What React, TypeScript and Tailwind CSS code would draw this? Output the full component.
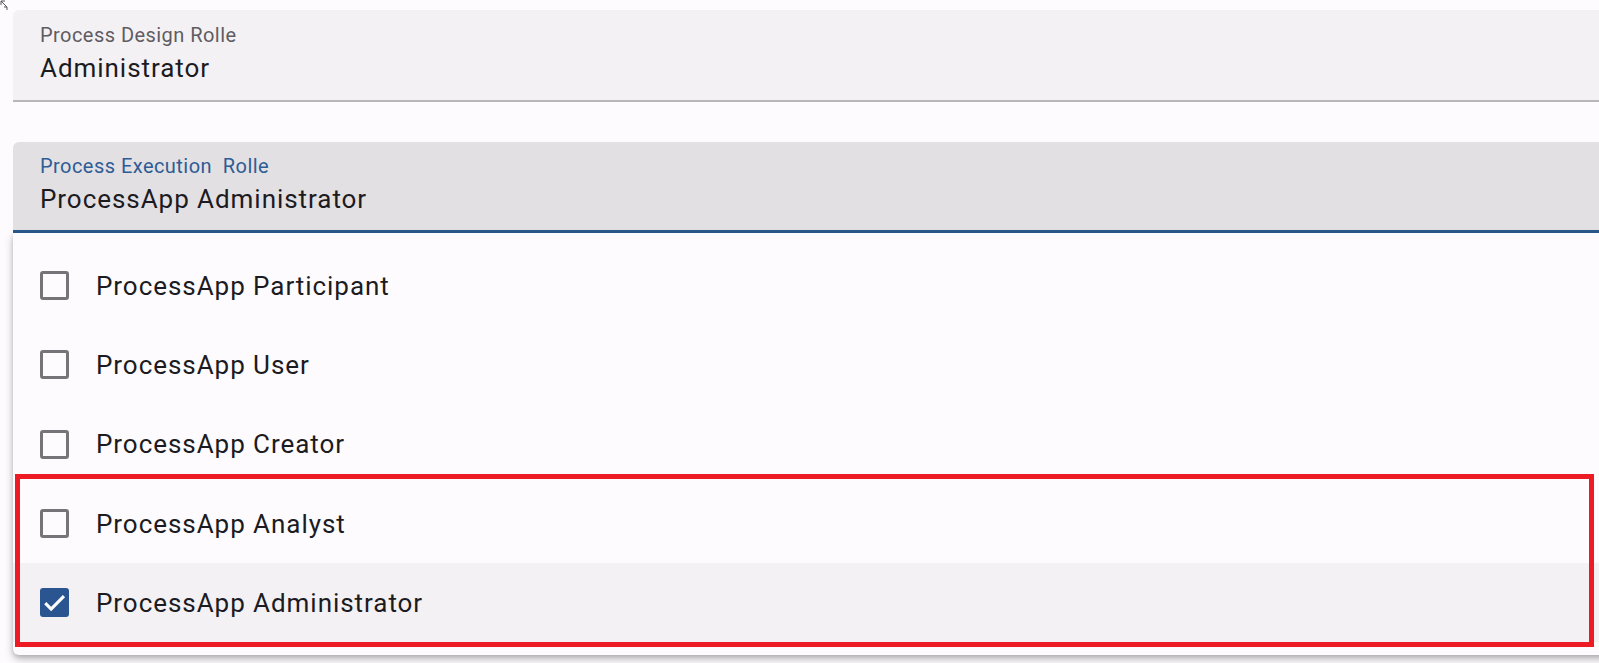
import React from "react";

const roles = [
  { name: "ProcessApp Participant", checked: false },
  { name: "ProcessApp User", checked: false },
  { name: "ProcessApp Creator", checked: false },
  { name: "ProcessApp Analyst", checked: false },
  { name: "ProcessApp Administrator", checked: true },
];

function Checkbox({ checked }: { checked: boolean }) {
  if (checked) {
    return (
      <span className="flex h-[29px] w-[29px] shrink-0 items-center justify-center rounded-[3px] bg-[#2b5590]">
        <svg viewBox="0 0 24 24" className="h-[27px] w-[27px]" fill="none">
          <path d="M3.8 12.6l5.2 5.2L20.4 6.4" stroke="#fff" strokeWidth="2.8" />
        </svg>
      </span>
    );
  }
  return <span className="h-[29px] w-[29px] shrink-0 rounded-[3px] border-[3px] border-[#767478]" />;
}

export default function App() {
  return (
    <div className="relative h-[663px] w-[1599px] overflow-hidden bg-[#fefbff] font-['Roboto',sans-serif] text-[#1c1b1f]">
      {/* resize cursor left over in the capture */}
      <svg className="absolute left-0 top-0" width="9" height="11" viewBox="0 0 9 11" fill="none">
        <path d="M1 1l6 6M1 1v4M1 1h4M7 7v3M7 7H4" stroke="#555" strokeWidth="1" />
      </svg>

      <div className="pl-[13px] pt-[10px]">
        {/* Process Design Rolle */}
        <div className="h-[92px] w-[1620px] rounded-t-[6px] border-b-2 border-[#b9b6ba] bg-[#f4f1f4] pl-[27px] pt-[13px]">
          <div className="text-[20px] leading-[24px] tracking-[0.45px] text-[#5f5c62]">Process Design Rolle</div>
          <div className="mt-[5px] text-[26px] leading-[32px] tracking-[0.95px]">Administrator</div>
        </div>

        {/* Process Execution Rolle */}
        <div className="mt-[40px] h-[91px] w-[1620px] rounded-t-[6px] border-b-[3px] border-[#2c5a8e] bg-[#e3e0e4] pl-[27px] pt-[12px]">
          <div className="whitespace-pre text-[20px] leading-[24px] tracking-[0.45px] text-[#2e5c94]">Process Execution  Rolle</div>
          <div className="mt-[5px] text-[26px] leading-[32px] tracking-[0.95px]">ProcessApp Administrator</div>
        </div>

        {/* dropdown panel */}
        <div className="w-[1620px] rounded-b-[6px] bg-[#fdfbfe] py-[13px] shadow-[0_4px_8px_rgba(0,0,0,0.25),0_2px_4px_rgba(0,0,0,0.12)]">
          {roles.map((role) => (
            <div
              key={role.name}
              className={`flex h-[79.3px] items-center gap-[27px] pl-[27px] ${role.checked ? "bg-[#f3f1f4]" : ""}`}
            >
              <Checkbox checked={role.checked} />
              <span className="text-[26px] leading-[32px] tracking-[0.95px]">{role.name}</span>
            </div>
          ))}
        </div>
      </div>

      {/* red annotation box */}
      <div className="absolute left-[15px] top-[474px] h-[173px] w-[1579px] border-[5px] border-[#ed1c24]" />
    </div>
  );
}
